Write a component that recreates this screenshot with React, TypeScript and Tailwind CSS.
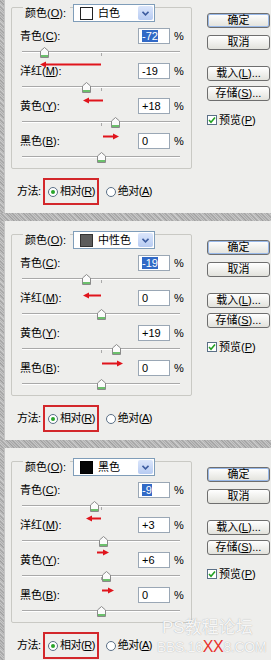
import React from 'react';

type Arrow = { x: number; y: number; w: number; dir: 'l' | 'r' };
type Panel = { name: string; swatch: string; swatchBorder: string; values: number[]; arrows: Arrow[] };

const rows = [
  { label: '青色', key: 'C' },
  { label: '洋红', key: 'M' },
  { label: '黄色', key: 'Y' },
  { label: '黑色', key: 'B' },
];

const panels: Panel[] = [
  {
    name: '白色',
    swatch: '#ffffff',
    swatchBorder: '#222222',
    values: [-72, -19, 18, 0],
    arrows: [
      { x: 28, y: 56, w: 61, dir: 'l' },
      { x: 71, y: 92, w: 20, dir: 'l' },
      { x: 91, y: 128, w: 16, dir: 'r' },
    ],
  },
  {
    name: '中性色',
    swatch: '#5c5c5c',
    swatchBorder: '#333333',
    values: [-19, 0, 19, 0],
    arrows: [
      { x: 71, y: 60, w: 18, dir: 'l' },
      { x: 90, y: 128, w: 21, dir: 'r' },
    ],
  },
  {
    name: '黑色',
    swatch: '#050505',
    swatchBorder: '#000000',
    values: [-9, 3, 6, 0],
    arrows: [
      { x: 74, y: 56, w: 15, dir: 'l' },
      { x: 85, y: 90, w: 12, dir: 'r' },
      { x: 90, y: 128, w: 12, dir: 'r' },
    ],
  },
];

const fmt = (v: number) => (v > 0 ? `+${v}` : `${v}`);

const Key = ({ k }: { k: string }) => (
  <>
    (<span className="underline underline-offset-1">{k}</span>)
  </>
);

const noise =
  'bg-[repeating-linear-gradient(45deg,#a7a7a7_0px,#c6c6c6_1px,#9d9d9d_2px,#bababa_3px,#cfcfcf_4px)]';

const Thumb = () => (
  <svg width="9" height="11" viewBox="0 0 9 11">
    <path d="M4.5 0.5 L8.5 4 V10.5 H0.5 V4 Z" fill="#fbfbfb" stroke="#8a8a8a" strokeWidth="1" />
    <path d="M1 8 H8 V10 H1 Z" fill="#6cc06c" />
  </svg>
);

const RedArrow = ({ a }: { a: Arrow }) => (
  <svg className="absolute" style={{ left: a.x, top: a.y - 3 }} width={a.w} height={7}>
    {a.dir === 'l' ? (
      <>
        <line x1={5} y1={3.5} x2={a.w} y2={3.5} stroke="#e0141c" strokeWidth={2} />
        <path d="M0 3.5 L6 0.5 L6 6.5 Z" fill="#e0141c" />
      </>
    ) : (
      <>
        <line x1={0} y1={3.5} x2={a.w - 5} y2={3.5} stroke="#e0141c" strokeWidth={2} />
        <path d={`M${a.w} 3.5 L${a.w - 6} 0.5 L${a.w - 6} 6.5 Z`} fill="#e0141c" />
      </>
    )}
  </svg>
);

const Btn = ({ children, primary, className }: { children: React.ReactNode; primary?: boolean; className: string }) => (
  <div
    className={`h-[15px] rounded-[3px] border border-[#6e6e6e] bg-linear-to-b from-white to-[#e2e2dc] flex items-center justify-center text-[11px] leading-none text-black ${
      primary ? 'shadow-[inset_0_0_0_1px_#98b8e8]' : ''
    } ${className}`}
  >
    {children}
  </div>
);

const Radio = ({ on }: { on: boolean }) => (
  <div className="w-[10px] h-[10px] rounded-full border border-[#5a6f86] bg-white flex items-center justify-center shrink-0">
    {on && <div className="w-[4px] h-[4px] rounded-full bg-[#2aa52a]" />}
  </div>
);

const PanelView = ({ p }: { p: Panel }) => (
  <div className="flex flex-col shrink-0">
    <div className="flex items-start">
      <div className="relative mt-[13px] ml-[6px] w-[181px] border border-[#c9c9c4] rounded-[2px] flex flex-col">
        {/* legend: colour picker */}
        <div className="-mt-[4px] h-[18px] ml-[11px] flex items-center">
          <span className="w-[47px] h-full flex items-center bg-[#eeeeec] pl-[2px] text-[11px]">
            颜色<Key k="O" />:
          </span>
          <div className="ml-[3px] w-[82px] h-[18px] border border-[#7f9db9] bg-white flex items-center">
            <div
              className="ml-[6px] w-[13px] h-[13px] border"
              style={{ background: p.swatch, borderColor: p.swatchBorder }}
            />
            <span className="ml-[5px] text-[11px] flex-1">{p.name}</span>
            <div className="mr-px w-[15px] h-[14px] rounded-[2px] bg-linear-to-b from-[#dbe6fb] to-[#b7cbf2] flex items-center justify-center">
              <svg width="7" height="5" viewBox="0 0 7 5">
                <path d="M0.5 0.8 L3.5 3.8 L6.5 0.8" fill="none" stroke="#3d5da0" strokeWidth="1.6" />
              </svg>
            </div>
          </div>
        </div>

        {/* sliders */}
        <div className="mt-[6px] flex flex-col">
          {rows.map((r, i) => {
            const v = p.values[i];
            return (
              <div key={r.key} className="h-[35px] flex flex-col">
                <div className="h-[16px] flex items-center pr-[7px]">
                  <span className="flex-1 pl-[8px] text-[11px]">
                    {r.label}
                    <Key k={r.key} />:
                  </span>
                  <div className="w-[32px] h-[16px] border border-[#9aa7b5] bg-white flex items-center pl-[3px] text-[11px]">
                    {i === 0 ? <span className="bg-[#3169c6] text-white leading-[12px]">{fmt(v)}</span> : fmt(v)}
                  </div>
                  <span className="ml-[4px] w-[10px] text-[11px]">%</span>
                </div>
                <div className="relative h-[19px]">
                  <div className="absolute top-[7px] left-[10px] right-[11px] h-[2px] border-t border-[#a9a9a9] border-b border-b-white" />
                  <div className="absolute top-[9px] left-[89px] w-px h-[3px] bg-[#a9a9a9]" />
                  <div className="absolute top-[3px]" style={{ left: 89 + v * 0.79 - 4 }}>
                    <Thumb />
                  </div>
                </div>
              </div>
            );
          })}
        </div>

        {p.arrows.map((a, i) => (
          <RedArrow key={i} a={a} />
        ))}
      </div>

      {/* buttons */}
      <div className="mt-[19px] ml-[15px] w-[63px] flex flex-col">
        <Btn primary className="">确定</Btn>
        <Btn className="mt-[7px]">取消</Btn>
        <Btn className="mt-[16px]">
          载入<Key k="L" />...
        </Btn>
        <Btn className="mt-[5px]">
          存储<Key k="S" />...
        </Btn>
        <div className="mt-[12px] h-[14px] flex items-center text-[11px]">
          <div className="w-[10px] h-[10px] border border-[#5a6f86] bg-white flex items-center justify-center">
            <svg width="8" height="8" viewBox="0 0 8 8">
              <path d="M1 4 L3 6.2 L7 1.5" fill="none" stroke="#22a022" strokeWidth="1.6" />
            </svg>
          </div>
          <span className="ml-[2px]">
            预览<Key k="P" />
          </span>
        </div>
      </div>
    </div>

    {/* method */}
    <div className="mt-[9px] h-[27px] flex items-center pl-[12px] text-[11px] tracking-[-0.5px]">
      <span className="w-[26px]">方法:</span>
      <div className="h-[27px] border-2 border-[#d3272b] flex items-center pl-[3px] pr-[2px]">
        <Radio on />
        <span className="ml-[2px]">
          相对<Key k="R" />
        </span>
      </div>
      <div className="ml-[7px]">
        <Radio on={false} />
      </div>
      <span className="ml-[2px]">
        绝对<Key k="A" />
      </span>
    </div>

    <div className={`mt-[8px] h-[8px] -ml-[5px] ${noise}`} />
  </div>
);

export default function App() {
  return (
    <div className="relative w-[271px] h-[660px] overflow-hidden bg-[#eeeeec] flex text-black font-['Liberation_Sans','Noto_Sans_CJK_SC',sans-serif]">
      <div className={`w-[4px] shrink-0 ${noise}`} />
      <div className="flex-1 flex flex-col -mt-[6px] border-l border-[#c4c4c4]">
        {panels.map((p) => (
          <PanelView key={p.name} p={p} />
        ))}
      </div>

      {/* watermark */}
      <div className="absolute left-[157px] top-[619px] flex flex-col leading-none pointer-events-none">
        <span className="ml-[5px] text-[17px] text-white/90 [text-shadow:0_0_1px_#9a9a9a]">PS教程论坛</span>
        <span className="mt-[3px] text-[14px] tracking-[-0.3px] text-white/90 [text-shadow:0_0_1px_#9a9a9a]">
          BBS.16<span className="text-[#e8302a] text-[16px] [text-shadow:none]">XX</span>8.COM
        </span>
      </div>
    </div>
  );
}
